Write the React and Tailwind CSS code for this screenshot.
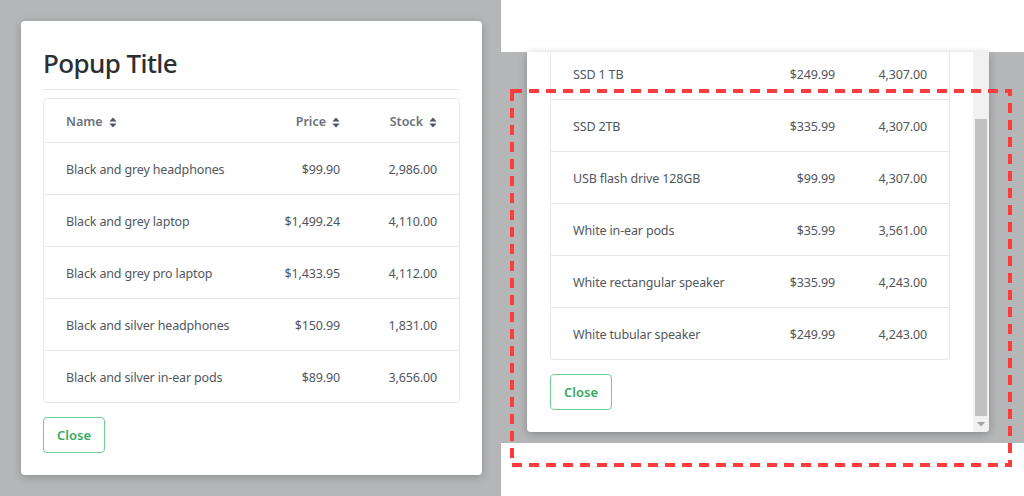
const leftRows = [
  { name: 'Black and grey headphones', price: '$99.90', stock: '2,986.00' },
  { name: 'Black and grey laptop', price: '$1,499.24', stock: '4,110.00' },
  { name: 'Black and grey pro laptop', price: '$1,433.95', stock: '4,112.00' },
  { name: 'Black and silver headphones', price: '$150.99', stock: '1,831.00' },
  { name: 'Black and silver in-ear pods', price: '$89.90', stock: '3,656.00' },
];

const rightRows = [
  { name: 'SSD 1 TB', price: '$249.99', stock: '4,307.00' },
  { name: 'SSD 2TB', price: '$335.99', stock: '4,307.00' },
  { name: 'USB flash drive 128GB', price: '$99.99', stock: '4,307.00' },
  { name: 'White in-ear pods', price: '$35.99', stock: '3,561.00' },
  { name: 'White rectangular speaker', price: '$335.99', stock: '4,243.00' },
  { name: 'White tubular speaker', price: '$249.99', stock: '4,243.00' },
];

const SortIcon = () => (
  <svg width="8" height="11" viewBox="0 0 8 11" className="ml-[6px] shrink-0">
    <path d="M4 0.5 L7.6 4.4 H0.4 Z" fill="#4b5563" />
    <path d="M4 10.5 L7.6 6.6 H0.4 Z" fill="#4b5563" />
  </svg>
);

const Row = ({ row, last, priceW, stockW }) => (
  <div
    className={`flex items-center px-[22px] pt-[3px] text-[12.5px] tracking-[-0.15px] text-[#52575e] ${
      last ? 'h-[51px]' : 'h-[52px] border-b border-[#e6e7ea]'
    }`}
  >
    <div className="flex-1 whitespace-nowrap">{row.name}</div>
    <div className={`${priceW} text-right`}>{row.price}</div>
    <div className={`${stockW} text-right`}>{row.stock}</div>
  </div>
);

const CloseButton = ({ className }) => (
  <button
    className={`h-[36px] w-[62px] rounded-[4px] border border-[#6fcf93] bg-white pt-[1px] text-[13px] font-semibold text-[#35a862] ${className}`}
  >
    Close
  </button>
);

const LeftPopup = () => (
  <div className="w-[461px] rounded-[4px] bg-white px-[22px] pt-[25px] pb-[22px] shadow-[0_2px_10px_rgba(0,0,0,0.22)]">
    <div className="border-b border-[#e6e7ea] pb-[9px]">
      <h2 className="h-[34px] text-[26px] leading-[34px] tracking-[-0.6px] font-medium text-[#2b2f33]">Popup Title</h2>
    </div>
    <div className="mt-[8px] rounded-[4px] border border-[#e6e7ea]">
      <div className="flex items-center h-[44px] px-[22px] pt-[3px] border-b border-[#e6e7ea] text-[12.5px] font-semibold text-[#6b7079]">
        <div className="flex flex-1 items-center">
          Name
          <SortIcon />
        </div>
        <div className="flex w-[100px] items-center justify-end">
          Price
          <SortIcon />
        </div>
        <div className="flex w-[97px] items-center justify-end">
          Stock
          <SortIcon />
        </div>
      </div>
      {leftRows.map((row, i) => (
        <Row key={row.name} row={row} last={i === leftRows.length - 1} priceW="w-[100px]" stockW="w-[97px]" />
      ))}
    </div>
    <CloseButton className="mt-[14px]" />
  </div>
);

const RightPopup = () => (
  <div className="flex h-[380px] w-[462px] overflow-hidden rounded-b-[4px] bg-white shadow-[0_2px_8px_rgba(0,0,0,0.25)]">
    <div className="flex-1 overflow-hidden px-[23px]">
      <div className="mt-[-4px] border-x border-b border-[#e6e7ea] rounded-b-[4px]">
        {rightRows.map((row, i) => (
          <Row key={row.name} row={row} last={i === rightRows.length - 1} priceW="w-[100px]" stockW="w-[92px]" />
        ))}
      </div>
      <CloseButton className="mt-[14px]" />
    </div>
    <div className="flex w-[16px] flex-col items-center bg-[#f1f1f1]">
      <div className="mt-[67px] h-[297px] w-[12px] bg-[#c1c1c1]" />
      <div className="flex flex-1 items-center justify-center">
        <svg width="8" height="5" viewBox="0 0 8 5">
          <path d="M0 0 H8 L4 4.5 Z" fill="#a3a3a3" />
        </svg>
      </div>
    </div>
  </div>
);

export default function App() {
  return (
    <div
      className="relative flex h-[496px] w-[1024px] overflow-hidden bg-white"
      style={{ fontFamily: '"Noto Sans", "Open Sans", sans-serif' }}
    >
      <div className="h-full w-[501px] bg-[#b5b6b8] pt-[21px] pl-[21px]">
        <LeftPopup />
      </div>
      <div className="flex-1 pt-[52px]">
        <div className="h-[391px] bg-[#b5b6b8] pl-[26px]">
          <RightPopup />
        </div>
      </div>
      <svg
        className="pointer-events-none absolute left-[510px] top-[89px]"
        width="502"
        height="378"
        viewBox="0 0 502 378"
      >
        <rect x="2" y="2" width="498" height="374" fill="none" stroke="#ff3b3b" strokeWidth="4" strokeDasharray="10 7" />
      </svg>
    </div>
  );
}
